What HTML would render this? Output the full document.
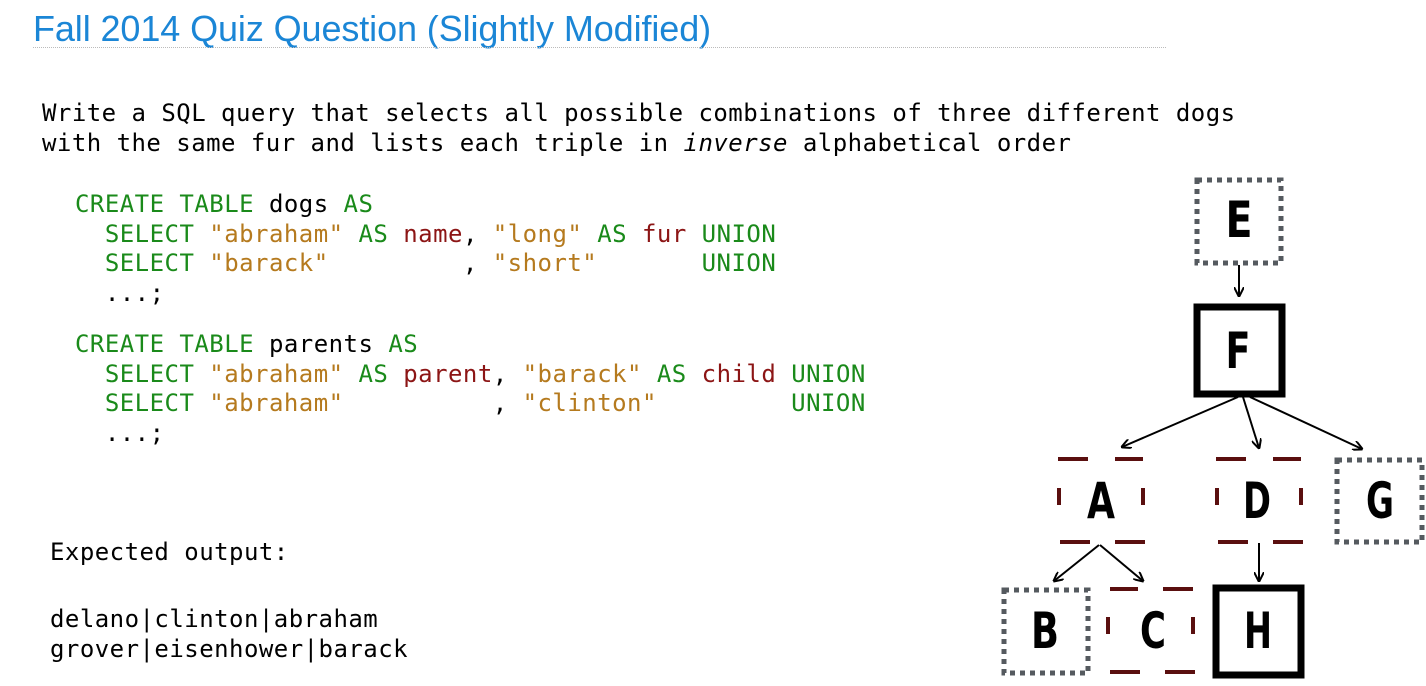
<!DOCTYPE html>
<html><head><meta charset="utf-8"><style>
body{margin:0;width:1426px;height:686px;background:#fff;position:relative;overflow:hidden}
.t{position:absolute;left:33px;top:8px;font:36px "Liberation Sans",sans-serif;color:#1b86d6;white-space:nowrap;letter-spacing:-0.1px}
.hr{position:absolute;left:33px;top:47px;width:1133px;border-top:1px dotted #bbb}
.m{position:absolute;font:24px "DejaVu Sans Mono",monospace;letter-spacing:0.47px;white-space:pre;color:#000;line-height:30px}
.k{color:#1a8a1a}.s{color:#b57a1e}.r{color:#8c1515}
</style></head><body>
<div class="t">Fall 2014 Quiz Question (Slightly Modified)</div>
<div class="hr"></div>
<div class="m" style="left:42px;top:98px">Write a SQL query that selects all possible combinations of three different dogs
with the same fur and lists each triple in <i>inverse</i> alphabetical order</div>
<div class="m" style="left:75px;top:190px;line-height:29.5px"><span class="k">CREATE TABLE</span> dogs <span class="k">AS</span>
  <span class="k">SELECT</span> <span class="s">"abraham"</span> <span class="k">AS</span> <span class="r">name</span>, <span class="s">"long"</span> <span class="k">AS</span> <span class="r">fur</span> <span class="k">UNION</span>
  <span class="k">SELECT</span> <span class="s">"barack"</span>         , <span class="s">"short"</span>       <span class="k">UNION</span>
  ...;</div>
<div class="m" style="left:75px;top:330px;line-height:29.5px"><span class="k">CREATE TABLE</span> parents <span class="k">AS</span>
  <span class="k">SELECT</span> <span class="s">"abraham"</span> <span class="k">AS</span> <span class="r">parent</span>, <span class="s">"barack"</span> <span class="k">AS</span> <span class="r">child</span> <span class="k">UNION</span>
  <span class="k">SELECT</span> <span class="s">"abraham"</span>          , <span class="s">"clinton"</span>         <span class="k">UNION</span>
  ...;</div>
<div class="m" style="left:50px;top:537px">Expected output:</div>
<div class="m" style="left:50px;top:604px">delano|clinton|abraham
grover|eisenhower|barack</div>
<svg width="1426" height="686" style="position:absolute;left:0;top:0">
<defs><marker id="a" markerWidth="10" markerHeight="10" refX="9" refY="5" orient="auto" markerUnits="userSpaceOnUse"><path d="M0,0 L10,5 L0,10" fill="none" stroke="#000" stroke-width="2"/></marker></defs>
<g fill="none" stroke="#555a5f" stroke-width="5" stroke-dasharray="5 5">
<rect x="1197" y="180" width="84" height="83"/>
<rect x="1337" y="460" width="85" height="82"/>
<rect x="1004" y="590" width="84" height="83"/>
</g>
<g fill="none" stroke="#000" stroke-width="7">
<rect x="1197" y="307" width="85" height="87"/>
<rect x="1216" y="588" width="85" height="87"/>
</g>
<g stroke="#5a0f0f" stroke-width="4">
<path d="M1058 459h30M1115 459h28M1060 542h30M1115 542h30M1059 488v17M1143 488v17"/>
<path d="M1216 459h30M1273 459h28M1218 542h30M1273 542h30M1217 488v17M1301 488v17"/>
<path d="M1110 589h28M1163 589h30M1110 672h30M1165 672h30M1108 617v17M1193 617v17"/>
</g>
<g stroke="#000" stroke-width="2" fill="none" marker-end="url(#a)">
<path d="M1239 265V296"/>
<path d="M1238 397L1122 447"/>
<path d="M1243 397L1259 448"/>
<path d="M1250 397L1362 449"/>
<path d="M1099 545L1054 581"/>
<path d="M1100 545L1143 581"/>
<path d="M1259 543V581"/>
</g>
<g font-family="DejaVu Sans,sans-serif" font-weight="bold" font-size="50" text-anchor="middle" lengthAdjust="spacingAndGlyphs">
<text x="1239" y="237" textLength="27" lengthAdjust="spacingAndGlyphs">E</text>
<text x="1238" y="368" textLength="25" lengthAdjust="spacingAndGlyphs">F</text>
<text x="1101" y="518" textLength="28" lengthAdjust="spacingAndGlyphs">A</text>
<text x="1257" y="518" textLength="28" lengthAdjust="spacingAndGlyphs">D</text>
<text x="1380" y="518" textLength="28" lengthAdjust="spacingAndGlyphs">G</text>
<text x="1045" y="648" textLength="28" lengthAdjust="spacingAndGlyphs">B</text>
<text x="1153" y="648" textLength="26" lengthAdjust="spacingAndGlyphs">C</text>
<text x="1258" y="648" textLength="28" lengthAdjust="spacingAndGlyphs">H</text>
</g>
</svg>
</body></html>
